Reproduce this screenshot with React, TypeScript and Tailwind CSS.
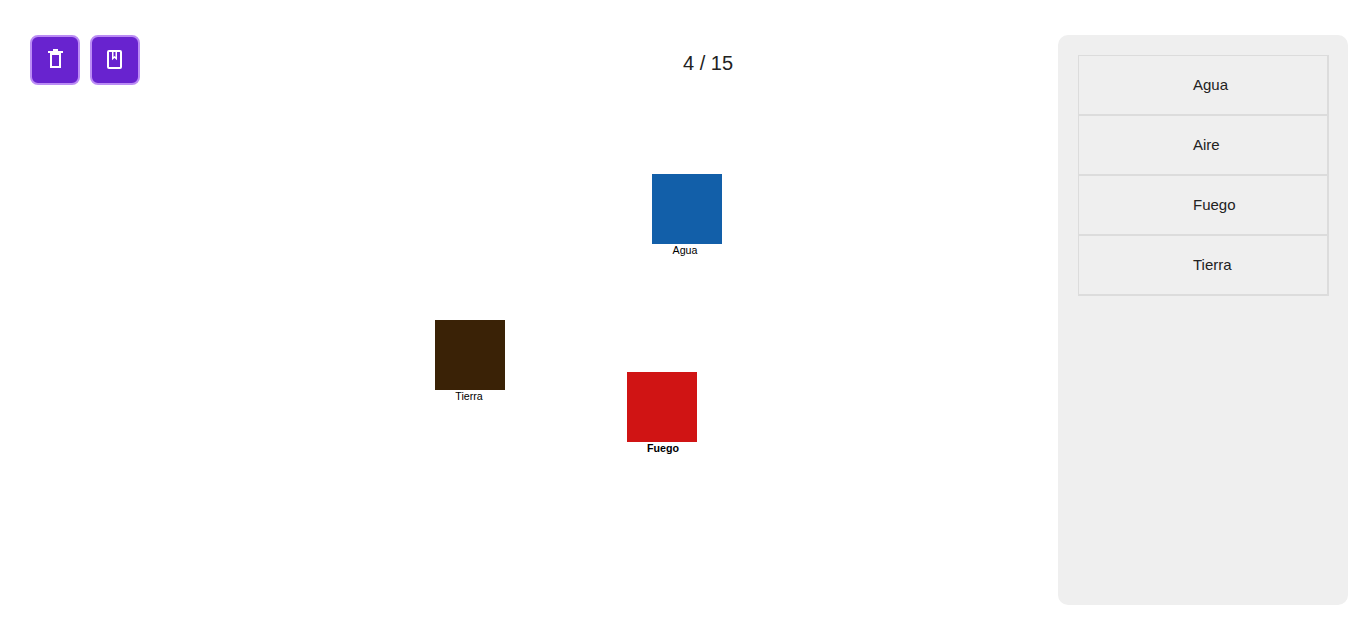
const elements = [
  { name: "Agua", left: 652, top: 174, color: "bg-[#125fa9]", labelClass: "left-[-20px] font-normal" },
  { name: "Tierra", left: 435, top: 320, color: "bg-[#3a2206]", labelClass: "left-[-19px] font-normal" },
  { name: "Fuego", left: 627, top: 372, color: "bg-[#d01414]", labelClass: "left-[-17px] font-bold" },
];

const rows = ["Agua", "Aire", "Fuego", "Tierra"];

const TrashIcon = () => (
  <svg width="24" height="24" viewBox="0 0 24 24" fill="none" stroke="currentColor" strokeWidth="2">
    <path d="M8 6h9v13H8z" />
    <path d="M5 4h15M10 2h5" />
  </svg>
);

const BookIcon = () => (
  <svg width="24" height="24" viewBox="0 0 24 24" fill="none" stroke="currentColor" strokeWidth="2">
    <rect x="5" y="3" width="13" height="17" rx="1" />
    <path d="M9.75 3v7.5l1.75-1.5 1.75 1.5V3" strokeWidth="1.5" />
  </svg>
);

const App = () => {
  return (
    <div className="relative h-[629px] w-full overflow-hidden bg-white font-['Liberation_Sans',sans-serif] text-[#222222]">
      <div className="flex items-start pl-[30px] pt-[35px] pr-[18px]">
        <div className="flex gap-[10px]">
          <button className="flex h-[50px] w-[50px] items-center justify-center rounded-lg border-2 border-[#bb8cf5] bg-[#6823cf] text-white">
            <TrashIcon />
          </button>
          <button className="flex h-[50px] w-[50px] items-center justify-center rounded-lg border-2 border-[#bb8cf5] bg-[#6823cf] text-white">
            <BookIcon />
          </button>
        </div>

        <div className="ml-[543px] mt-[16px] w-[50px] whitespace-nowrap text-[20px] leading-[24px]">4 / 15</div>

        <aside className="ml-auto h-[570px] w-[290px] rounded-[10px] bg-[#efefef] p-5">
          {rows.map((row) => (
            <div
              key={row}
              className="-mb-px flex h-[61px] w-[251px] items-center border border-r-2 border-b-2 border-[#dcdcdc] pl-[114px] text-[15px]"
            >
              {row}
            </div>
          ))}
        </aside>
      </div>

      {elements.map((el) => (
        <div
          key={el.name}
          className={`absolute h-[70px] w-[70px] ${el.color}`}
          style={{ left: el.left, top: el.top }}
        >
          <span
            className={`absolute top-[70px] w-[106px] text-center text-[10.67px] leading-[13px] text-black ${el.labelClass}`}
          >
            {el.name}
          </span>
        </div>
      ))}
    </div>
  );
};

export default App;
